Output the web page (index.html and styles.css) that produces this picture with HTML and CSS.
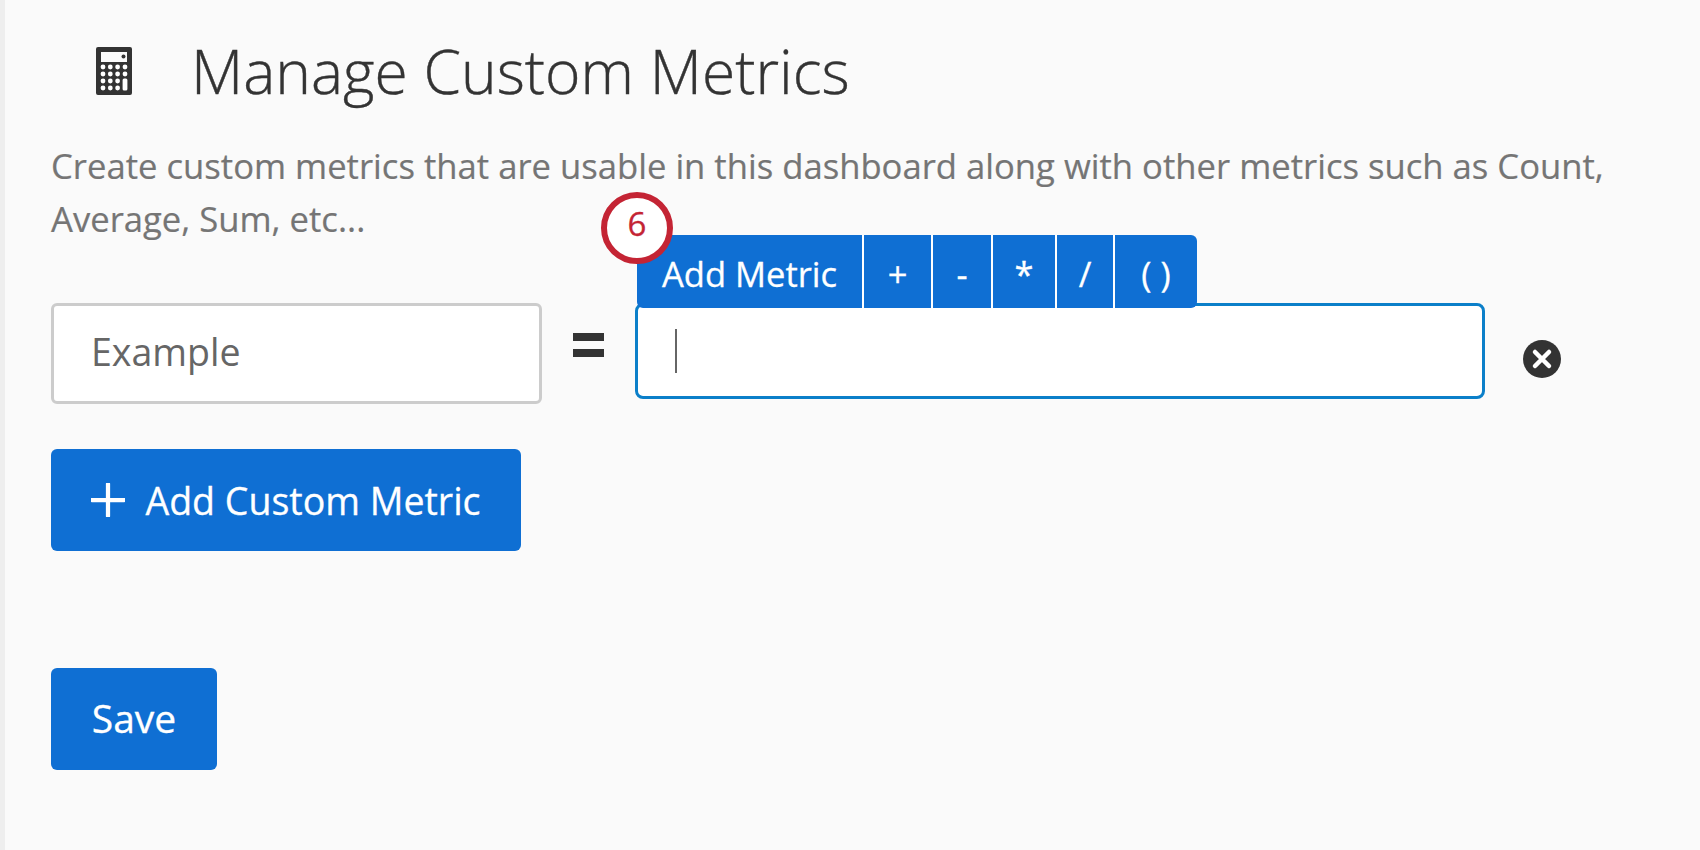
FILE: index.html
```html
<!DOCTYPE html>
<html lang="en">
<head>
  <meta charset="UTF-8" />
  <title>Manage Custom Metrics</title>
  <link rel="stylesheet" href="styles.css">
</head>
<body>
  <div class="page">
    <div class="title-row">
      <svg class="calc-icon" viewBox="0 0 36 48" width="36" height="48">
        <path fill="#333" fill-rule="evenodd" d="M2 0h32a2 2 0 0 1 2 2v44a2 2 0 0 1-2 2H2a2 2 0 0 1-2-2V2a2 2 0 0 1 2-2zM5 5v10h26V5z"/>
        <circle cx="27.500" cy="9.500" r="2" fill="#333"/>
        <g fill="#fff">
          <circle cx="7" cy="20" r="2.400"/><circle cx="14.300" cy="20" r="2.400"/><circle cx="21.600" cy="20" r="2.400"/><circle cx="29" cy="20" r="2.400"/>
          <circle cx="7" cy="27" r="2.400"/><circle cx="14.300" cy="27" r="2.400"/><circle cx="21.600" cy="27" r="2.400"/><circle cx="29" cy="27" r="2.400"/>
          <circle cx="7" cy="34" r="2.400"/><circle cx="14.300" cy="34" r="2.400"/><circle cx="21.600" cy="34" r="2.400"/><rect x="26.600" y="31.500" width="4.800" height="12" rx="1.500"/>
          <circle cx="7" cy="41" r="2.400"/><circle cx="14.300" cy="41" r="2.400"/><circle cx="21.600" cy="41" r="2.400"/>
        </g>
      </svg>
      <h1>Manage Custom Metrics</h1>
    </div>
    <p class="desc">Create custom metrics that are usable in this dashboard along with other metrics such as Count, Average, Sum, etc...</p>

    <div class="metric-row">
      <div class="name-box">Example</div>
      <div class="equals"></div>
      <div class="expr">
        <div class="toolbar">
          <span class="tool tool-first">Add Metric</span>
          <span class="tool tool-plus">+</span>
          <span class="tool tool-minus">-</span>
          <span class="tool tool-star">*</span>
          <span class="tool tool-slash">/</span>
          <span class="tool tool-paren">( )</span>
        </div>
        <div class="badge">6</div>
        <div class="caret"></div>
      </div>
      <svg class="remove" viewBox="0 0 38 38" width="38" height="38">
        <circle cx="19" cy="19" r="19" fill="#333"/>
        <path d="M12 12l14 14M26 12l-14 14" stroke="#fff" stroke-width="4.500" stroke-linecap="round"/>
      </svg>
    </div>

    <button class="btn btn-add">
      <svg viewBox="0 0 36 36" width="34" height="34"><path d="M18 1v34M1 18h34" stroke="#fff" stroke-width="4.500" stroke-linecap="round"/></svg>
      Add Custom Metric
    </button>
    <button class="btn btn-save">Save</button>
  </div>
</body>
</html>
```

FILE: styles.css
```css
html, body {
  height: 100%;
  margin: 0;
}
body {
  background: #fafafa;
  color: #333;
  font-family: 'Open Sans', sans-serif;
  box-sizing: border-box;
  border-left: 5px solid #eee;
  overflow: hidden;
}
.page {
  padding: 0 46px;
  display: flex;
  flex-direction: column;
  align-items: flex-start;
}
.title-row {
  display: flex;
  align-items: center;
  height: 141px;
  padding-left: 45px;
  box-sizing: border-box;
}
.calc-icon {
  margin-right: 59px;
}
h1 {
  font-size: 60.500px;
  font-weight: 300;
  margin: 0;
  color: #333;
  -webkit-text-stroke: 0.4px #333;
}
.desc {
  margin: 0;
  width: 1570px;
  font-size: 34.650px;
  line-height: 53px;
  color: #757575;
  margin-top: -2px;
  -webkit-text-stroke: 0.2px #757575;
}
.metric-row {
  display: flex;
  align-items: flex-start;
  margin-top: 58px;
  height: 101px;
}
.name-box {
  width: 491px;
  height: 101px;
  box-sizing: border-box;
  border: 3px solid #ccc;
  border-radius: 6px;
  background: #fff;
  padding-left: 37px;
  font-size: 37.500px;
  line-height: 92px;
  color: #666;
}
.equals {
  width: 31px;
  height: 8px;
  margin: 30px 31px 0;
  border-top: 8px solid #333;
  border-bottom: 8px solid #333;
}
.expr {
  position: relative;
  width: 850px;
  height: 96px;
  box-sizing: border-box;
  border: 3px solid #0b7fc9;
  border-radius: 8px;
  background: #fff;
}
.toolbar {
  position: absolute;
  left: -1px;
  bottom: 88px;
  display: flex;
  height: 73px;
  background: #0f6fd3;
  border-radius: 6px;
  color: #fff;
  font-size: 34.500px;
  -webkit-text-stroke: 0.3px #fff;
}
.tool {
  display: flex;
  align-items: center;
  justify-content: center;
  box-sizing: border-box;
  border-left: 2px solid #fff;
  padding-top: 4px;
}
.tool-first { width: 225px; border-left: none; }
.tool-plus { width: 69px; }
.tool-minus { width: 60px; }
.tool-star { width: 64px; }
.tool-slash { width: 58px; }
.tool-paren { width: 84px; }
.badge {
  position: absolute;
  left: -37px;
  top: -114px;
  width: 72px;
  height: 72px;
  box-sizing: border-box;
  border: 6px solid #c42434;
  border-radius: 50%;
  background: #fff;
  color: #c42434;
  font-size: 33px;
  line-height: 52px;
  text-align: center;
  -webkit-text-stroke: 0.3px #c42434;
}
.caret {
  width: 2px;
  height: 44px;
  background: #666;
  margin: 23px 0 0 37px;
}
.remove {
  margin: 37px 0 0 38px;
}
.btn {
  display: flex;
  align-items: center;
  justify-content: center;
  height: 102px;
  border: none;
  border-radius: 6px;
  background: #0f6fd3;
  color: #fff;
  font-family: inherit;
  font-size: 37.500px;
  padding: 0;
  -webkit-text-stroke: 0.3px #fff;
}
.btn svg {
  margin-right: 20px;
}
.btn-add {
  width: 470px;
  margin-top: 45px;
}
.btn-save {
  width: 166px;
  margin-top: 117px;
  font-size: 39px;
  padding-bottom: 4px;
}
```
